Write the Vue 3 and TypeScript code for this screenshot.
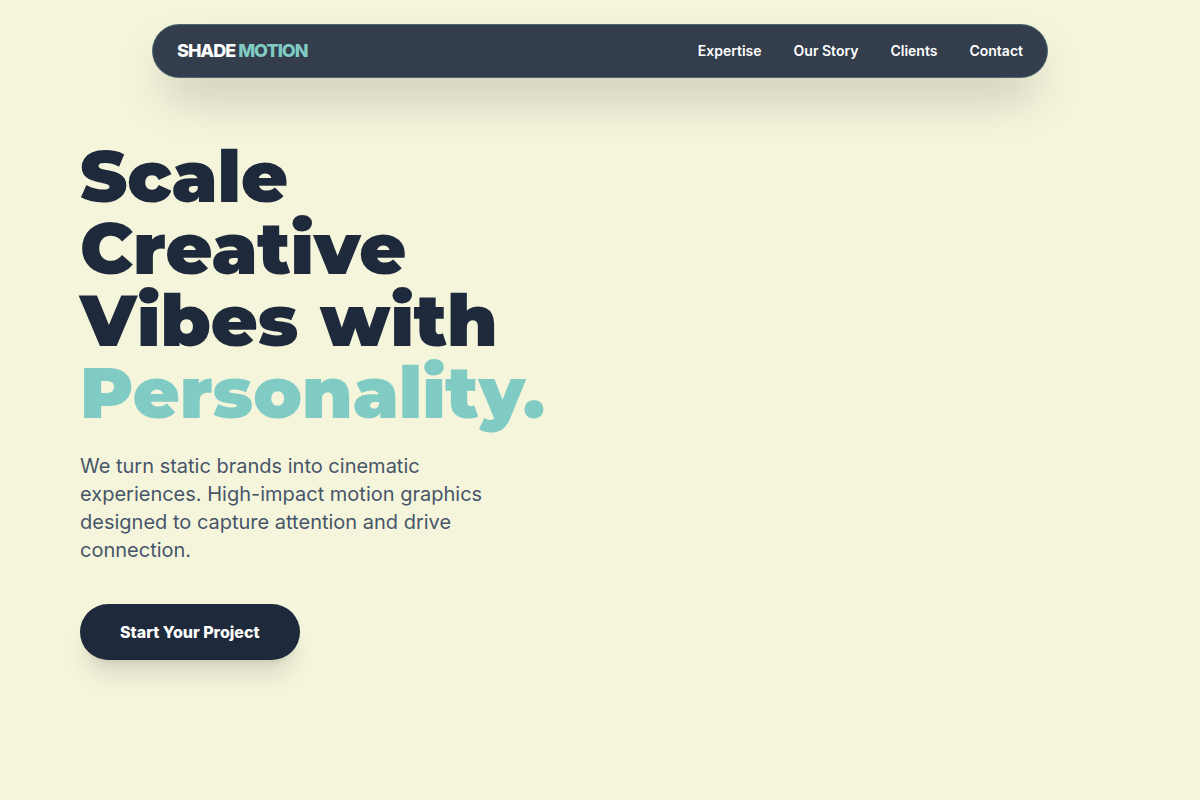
<script setup lang="ts">
const links: string[] = ['Expertise', 'Our Story', 'Clients', 'Contact']
const lines: string[] = ['Scale', 'Creative', 'Vibes with']
</script>

<template>
  <div class="page">
    <header class="nav">
      <a class="brand" href="#">SHADE <span>MOTION</span></a>
      <nav class="links">
        <a v-for="link in links" :key="link" href="#">{{ link }}</a>
      </nav>
    </header>
    <main class="hero">
      <h1>
        <span v-for="line in lines" :key="line" class="line">{{ line }}</span>
        <span class="line accent">Personality.</span>
      </h1>
      <p>We turn static brands into cinematic experiences. High-impact motion graphics designed to capture attention and drive connection.</p>
      <button type="button">Start Your Project</button>
    </main>
  </div>
</template>

<style>
body {
  margin: 0;
  background: #f5f5dc;
}
</style>

<style scoped>
.page {
  box-sizing: border-box;
  min-height: 100vh;
  padding-top: 24px;
  background: #f5f5dc;
  color: #1e293b;
  font-family: Inter, "Liberation Sans", sans-serif;
}
.nav {
  box-sizing: border-box;
  display: flex;
  align-items: center;
  justify-content: space-between;
  width: calc(100% - 48px);
  max-width: 896px;
  margin: 0 auto;
  padding: 12px 24px;
  border: 1px solid rgba(128, 203, 196, 0.3);
  border-radius: 999px;
  background: rgba(30, 41, 59, 0.9);
  box-shadow: 0 25px 50px -12px rgba(0, 0, 0, 0.25);
}
.nav a {
  color: #fff;
  text-decoration: none;
}
.nav .brand {
  font-size: 18px;
  font-weight: 800;
  line-height: 28px;
  letter-spacing: -1px;
}
.brand span {
  color: #80cbc4;
}
.links {
  display: flex;
  gap: 32px;
  font-size: 14px;
  font-weight: 600;
  line-height: 20px;
}
.hero {
  max-width: 480px;
  padding: 62px 80px 0;
}
h1 {
  margin: 0 0 24px;
  font-family: Montserrat, Inter, sans-serif;
  font-size: 72px;
  font-weight: 900;
  line-height: 72px;
  white-space: nowrap;
}
.line {
  display: block;
}
.accent {
  color: #80cbc4;
}
p {
  max-width: 448px;
  margin: 0 0 40px;
  color: #475569;
  font-size: 20px;
  line-height: 28px;
}
button {
  padding: 16px 40px;
  border: 0;
  border-radius: 999px;
  background: #1e293b;
  color: #fff;
  font-family: inherit;
  font-size: 16px;
  font-weight: 800;
  line-height: 24px;
  box-shadow: 0 20px 25px -5px rgba(0, 0, 0, 0.1), 0 8px 10px -6px rgba(0, 0, 0, 0.1);
  cursor: pointer;
}
</style>
